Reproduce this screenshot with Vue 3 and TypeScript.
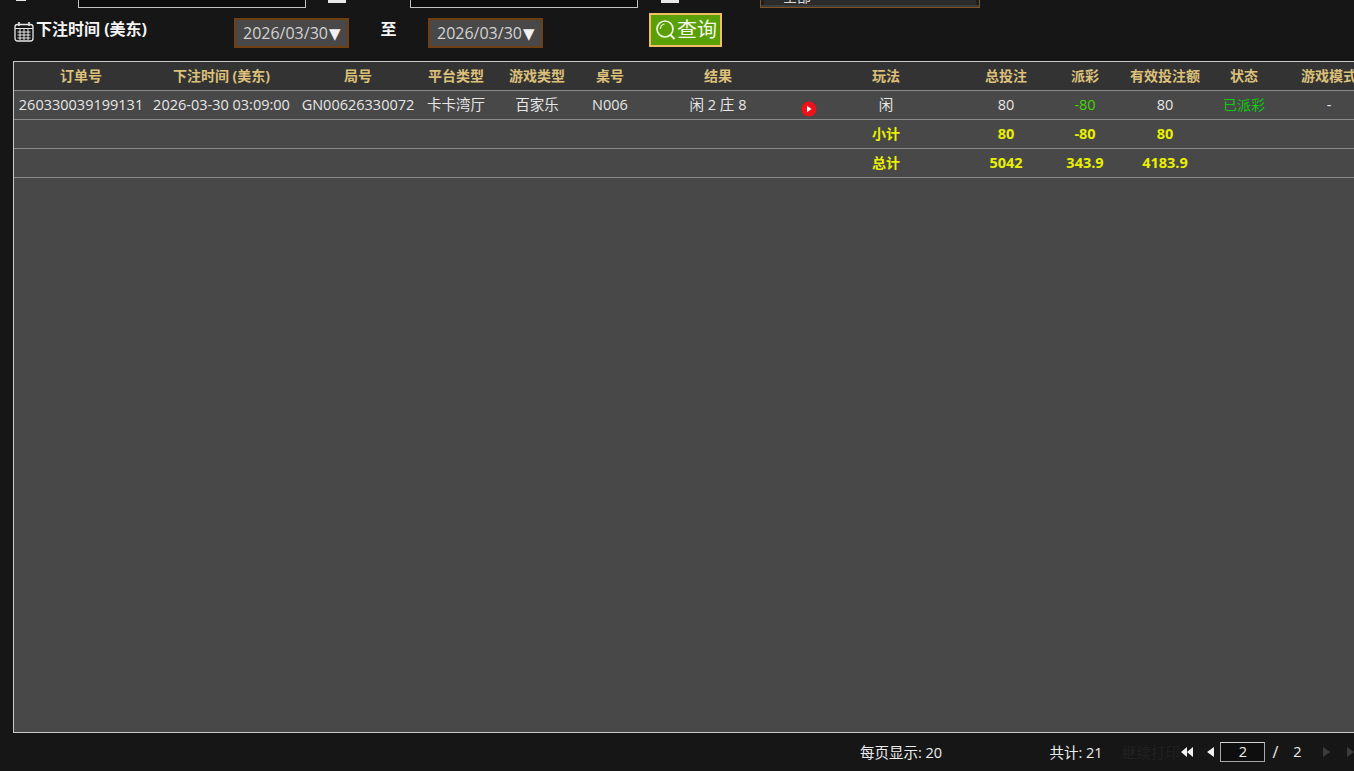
<script setup lang="ts">
interface Col { label: string; width: number }
const cols: Col[] = [
  { label: '订单号', width: 134 },
  { label: '下注时间 (美东)', width: 147 },
  { label: '局号', width: 126 },
  { label: '平台类型', width: 70 },
  { label: '游戏类型', width: 92 },
  { label: '桌号', width: 54 },
  { label: '结果', width: 162 },
  { label: '', width: 20 },
  { label: '玩法', width: 134 },
  { label: '总投注', width: 106 },
  { label: '派彩', width: 52 },
  { label: '有效投注额', width: 108 },
  { label: '状态', width: 50 },
  { label: '游戏模式', width: 120 },
]
const summaries = [
  { label: '小计', bet: '80', payout: '-80', valid: '80' },
  { label: '总计', bet: '5042', payout: '343.9', valid: '4183.9' },
]
</script>

<template>
  <div class="page">
    <div class="cut-row">
      <span class="cut-mark first">至</span>
      <span class="cut-input"></span>
      <span class="cut-mark second">至</span>
      <span class="cut-input"></span>
      <span class="cut-mark third">至</span>
      <span class="cut-select"><span>全部</span></span>
    </div>

    <div class="filter-row">
      <svg class="calendar" width="20" height="21" viewBox="0 0 20 21" fill="none" stroke="#e8e8e8">
        <rect x="1" y="3.5" width="18" height="16.5" rx="2.5" stroke-width="1.3" />
        <path d="M5 1v4M15 1v4" stroke-width="1.6" />
        <path d="M1 7.5h18M3.5 11h13M3.5 14h13M3.5 17h13M6 8v11M10 8v11M14 8v11" stroke-width="1" />
      </svg>
      <span class="filter-label">下注时间 (美东)</span>
      <span class="date-box from">2026/03/30<i>▼</i></span>
      <span class="to-label">至</span>
      <span class="date-box">2026/03/30<i>▼</i></span>
      <button class="query">
        <svg width="22" height="24" viewBox="0 0 22 24" fill="none" stroke="#eef6e0">
          <circle cx="10" cy="11" r="8" stroke-width="1.7" />
          <path d="M15.5 17l4 4" stroke-width="2" />
          <path d="M5.5 11a5 5 0 0 1 4-5" stroke-width="1.2" />
        </svg>
        <span>查询</span>
      </button>
    </div>

    <div class="panel">
      <table>
        <colgroup>
          <col v-for="(c, i) in cols" :key="i" :style="{ width: c.width + 'px' }" />
        </colgroup>
        <thead>
          <tr>
            <th v-for="(c, i) in cols" :key="i">{{ c.label }}</th>
          </tr>
        </thead>
        <tbody>
          <tr>
            <td>260330039199131</td>
            <td>2026-03-30 03:09:00</td>
            <td>GN00626330072</td>
            <td>卡卡湾厅</td>
            <td>百家乐</td>
            <td>N006</td>
            <td>闲 2 庄 8</td>
            <td>
              <svg class="play" width="16" height="16" viewBox="0 0 16 16">
                <circle cx="8" cy="8" r="7.5" fill="#f01018" />
                <path d="M6 4.8l4.6 3.2L6 11.2z" fill="#fff" />
              </svg>
            </td>
            <td>闲</td>
            <td>80</td>
            <td class="green-num">-80</td>
            <td>80</td>
            <td class="green-state">已派彩</td>
            <td>-</td>
          </tr>
          <tr v-for="s in summaries" :key="s.label" class="summary">
            <td colspan="8"></td>
            <td class="sum-label">{{ s.label }}</td>
            <td>{{ s.bet }}</td>
            <td>{{ s.payout }}</td>
            <td>{{ s.valid }}</td>
            <td colspan="2"></td>
          </tr>
        </tbody>
      </table>
    </div>

    <div class="footer">
      <span class="per-page">每页显示: 20</span>
      <span class="total">共计: 21</span>
      <span class="print">继续打印</span>
      <svg class="first-arrow" width="12" height="10" viewBox="0 0 12 10" fill="#f2f2f2">
        <path d="M6 0v10L0 5zM12 0v10L6 5z" />
      </svg>
      <svg class="prev-arrow" width="7" height="10" viewBox="0 0 7 10" fill="#f2f2f2">
        <path d="M7 0v10L0 5z" />
      </svg>
      <span class="page-input">2</span>
      <span class="slash">/</span>
      <span class="page-count">2</span>
      <svg class="next-arrow" width="7" height="10" viewBox="0 0 7 10" fill="#3d3d3d">
        <path d="M0 0v10l7-5z" />
      </svg>
      <svg class="last-arrow" width="7" height="10" viewBox="0 0 7 10" fill="#3d3d3d">
        <path d="M0 0v10l7-5z" />
      </svg>
    </div>
  </div>
</template>

<style>
html, body {
  margin: 0;
  height: 100%;
  overflow: hidden;
  background: #161616;
}
</style>

<style scoped>
.page {
  width: 1354px;
  height: 771px;
  overflow: hidden;
  background: #161616;
  color: #e6e6e6;
  font-family: "Open Sans", "Noto Sans CJK SC", sans-serif;
  font-size: 14.5px;
}
.cut-row {
  display: flex;
  align-items: flex-end;
  height: 8px;
  line-height: 1;
}
.cut-mark {
  overflow: hidden;
  height: 3px;
  width: 18px;
  position: relative;
  background: #e8e8e8;
  color: transparent;
  font-size: 18px;
  margin-bottom: 5px;
}
.cut-mark.first {
  width: 10px;
  height: 1px;
  margin: 0 16px 7px 16px;
}
.cut-mark.second { margin-left: 22px; margin-right: 64px; }
.cut-mark.third { margin-left: 23px; margin-right: 81px; }
.cut-input {
  width: 228px;
  height: 8px;
  box-sizing: border-box;
  border: 1px solid #c4c4c4;
  border-top: 0;
  background: #0c0c0c;
}
.cut-input:nth-child(2) { margin-left: 36px; }
.cut-select {
  width: 220px;
  height: 8px;
  box-sizing: border-box;
  border: 1px solid #7e5427;
  border-top: 0;
  background: #2b2b2b;
  box-shadow: inset 0 -2px 0 #3c3c3c, inset 3px 0 0 #1e1e1e, inset -3px 0 0 #1e1e1e;
  padding-left: 22px;
  overflow: hidden;
  position: relative;
}
.cut-select span {
  position: absolute;
  left: 22px;
  bottom: 3px;
  font-size: 14px;
  color: #ddd;
  line-height: 14px;
}
.filter-row {
  display: flex;
  align-items: flex-start;
  height: 53px;
  padding-top: 5px;
  box-sizing: border-box;
}
.calendar {
  margin: 8px 0 0 14px;
  flex: none;
}
.filter-label {
  width: 198px;
  margin-left: 2px;
  margin-top: 5px;
  font-size: 16px;
  line-height: 22px;
  font-weight: 700;
  color: #f4f4f4;
}
.date-box {
  width: 115px;
  height: 30px;
  margin-top: 5px;
  box-sizing: border-box;
  border: 2px solid #6e3f12;
  outline: 0;
  background: #484848;
  color: #d2d2d2;
  font-size: 16px;
  line-height: 26px;
  padding-left: 7px;
  white-space: nowrap;
}
.date-box i {
  font-style: normal;
  color: #f2f2f2;
  font-size: 15px;
  margin-left: 1px;
  font-family: "DejaVu Sans", sans-serif;
}
.to-label {
  width: 79px;
  margin-top: 5px;
  text-align: center;
  font-size: 16px;
  line-height: 22px;
  font-weight: 700;
  color: #f4f4f4;
}
.query {
  display: flex;
  align-items: center;
  width: 73px;
  height: 34px;
  margin-left: 106px;
  padding: 0 0 0 4px;
  box-sizing: border-box;
  border: 2px solid #f0bf64;
  background: #5b9f06;
  color: #f4f8ea;
  font-family: inherit;
  font-size: 20px;
  line-height: 30px;
}
.query svg {
  flex: none;
}
.query span {
  white-space: nowrap;
}
.panel {
  width: 1400px;
  height: 672px;
  margin-left: 13px;
  box-sizing: border-box;
  border: 1px solid #c8c8c8;
  background: #484848;
}
table {
  width: 1375px;
  table-layout: fixed;
  border-collapse: separate;
  border-spacing: 0;
}
th, td {
  padding: 0;
  text-align: center;
  white-space: nowrap;
  height: 28px;
  line-height: 26px;
  border-bottom: 1px solid #8a8a8a;
  box-sizing: content-box;
}
th {
  height: 28px;
  background: #333333;
  color: #dcc07a;
  font-weight: 700;
  font-size: 14px;
}
.play {
  display: block;
  margin: 7px auto 0 2px;
}
.green-num { color: #44d400; }
.green-state { color: #0ccc0c; font-size: 14px; }
.summary td {
  color: #e8f000;
  font-weight: 700;
}
.sum-label { font-size: 14px; }
.footer {
  display: flex;
  align-items: center;
  height: 38px;
  padding-bottom: 1px;
  box-sizing: border-box;
  color: #ececec;
}
.per-page { margin-left: 860px; width: 191px; white-space: nowrap; }
.total { width: 73px; white-space: nowrap; }
.print { width: 60px; color: #212121; white-space: nowrap; }
.first-arrow { flex: none; }
.prev-arrow { flex: none; margin-left: 14px; }
.page-input {
  flex: none;
  width: 45px;
  height: 20px;
  margin-left: 6px;
  box-sizing: border-box;
  border: 1px solid #a8a8a8;
  border-top-color: #d0d0d0;
  background: #0e0e0e;
  text-align: center;
  line-height: 18px;
}
.slash { margin-left: 7px; width: 21px; font-size: 16px; }
.page-count { width: 30px; margin-left: 0; }
.next-arrow { flex: none; }
.last-arrow { flex: none; margin-left: 17px; }
</style>
